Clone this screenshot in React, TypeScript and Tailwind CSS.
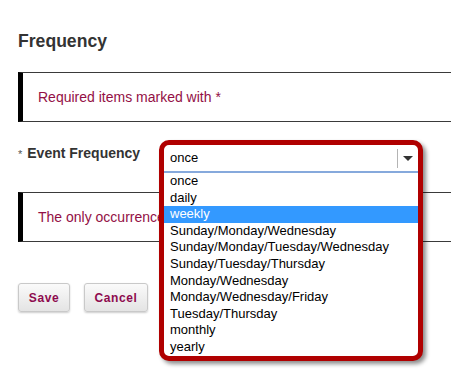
const options = [
  "once",
  "daily",
  "weekly",
  "Sunday/Monday/Wednesday",
  "Sunday/Monday/Tuesday/Wednesday",
  "Sunday/Tuesday/Thursday",
  "Monday/Wednesday",
  "Monday/Wednesday/Friday",
  "Tuesday/Thursday",
  "monthly",
  "yearly",
];

function Message({ text }: { text: string }) {
  return (
    <div className="flex h-[50px] items-center border-y border-l-[5px] border-y-[#3a3a3a] border-l-black pl-[15px] text-[14px] text-[#930f45]">
      {text}
    </div>
  );
}

function App() {
  return (
    <main className="relative h-[377px] w-[451px] overflow-hidden bg-white font-['Liberation_Sans',Arial,sans-serif]">
      <div className="pl-[18px]">
        <h2 className="mt-[31px] text-[17.6px] font-bold leading-[20px] text-[#333]">Frequency</h2>

        <div className="mt-[21px] w-[440px]">
          <Message text="Required items marked with *" />
        </div>

        <div className="mt-[23px] flex h-[16px] items-baseline leading-[16px] text-[#333]">
          <span className="text-[11px] text-[#555]">*</span>
          <span className="ml-[5px] text-[14px] font-bold">Event Frequency</span>
        </div>

        <div className="mt-[31px] w-[440px]">
          <Message text="The only occurrence of this event is on the start date." />
        </div>

        <div className="mt-[41px] flex gap-[14px]">
          <button className="h-[29px] w-[52px] rounded-[3px] border border-[#c9c9c9] bg-gradient-to-b from-[#fafafa] to-[#e4e4e4] text-[12px] font-bold tracking-[0.6px] text-[#8e0b4e] shadow-[0_1px_2px_rgba(0,0,0,0.2)]">
            Save
          </button>
          <button className="h-[29px] w-[64px] rounded-[3px] border border-[#c9c9c9] bg-gradient-to-b from-[#fafafa] to-[#e4e4e4] text-[12px] font-bold tracking-[0.6px] text-[#8e0b4e] shadow-[0_1px_2px_rgba(0,0,0,0.2)]">
            Cancel
          </button>
        </div>
      </div>

      <div className="absolute left-[159px] top-[140px] z-10 w-[264px] rounded-[10px] border-[5px] border-[#b00000] bg-white shadow-[3px_3px_4px_rgba(0,0,0,0.45)]">
        <div className="flex h-[26px] items-center">
          <span className="flex-1 pl-[6px] text-[13px] text-black">once</span>
          <div className="flex h-[19px] w-[21px] items-center justify-center border-l border-[#b4b4b4]">
            <svg width="10" height="5" viewBox="0 0 10 5">
              <path d="M0 0 H10 L5 5 Z" fill="#333" />
            </svg>
          </div>
        </div>
        <div className="h-[2px] bg-[#86a9dc]" />
        <ul className="text-[13px] leading-[16.6px] text-black">
          {options.map((o) => (
            <li key={o} className={o === "weekly" ? "h-[16.6px] bg-[#3399ff] pl-[6px] text-white" : "h-[16.6px] pl-[6px]"}>
              {o}
            </li>
          ))}
        </ul>
      </div>
    </main>
  );
}

export default App;
